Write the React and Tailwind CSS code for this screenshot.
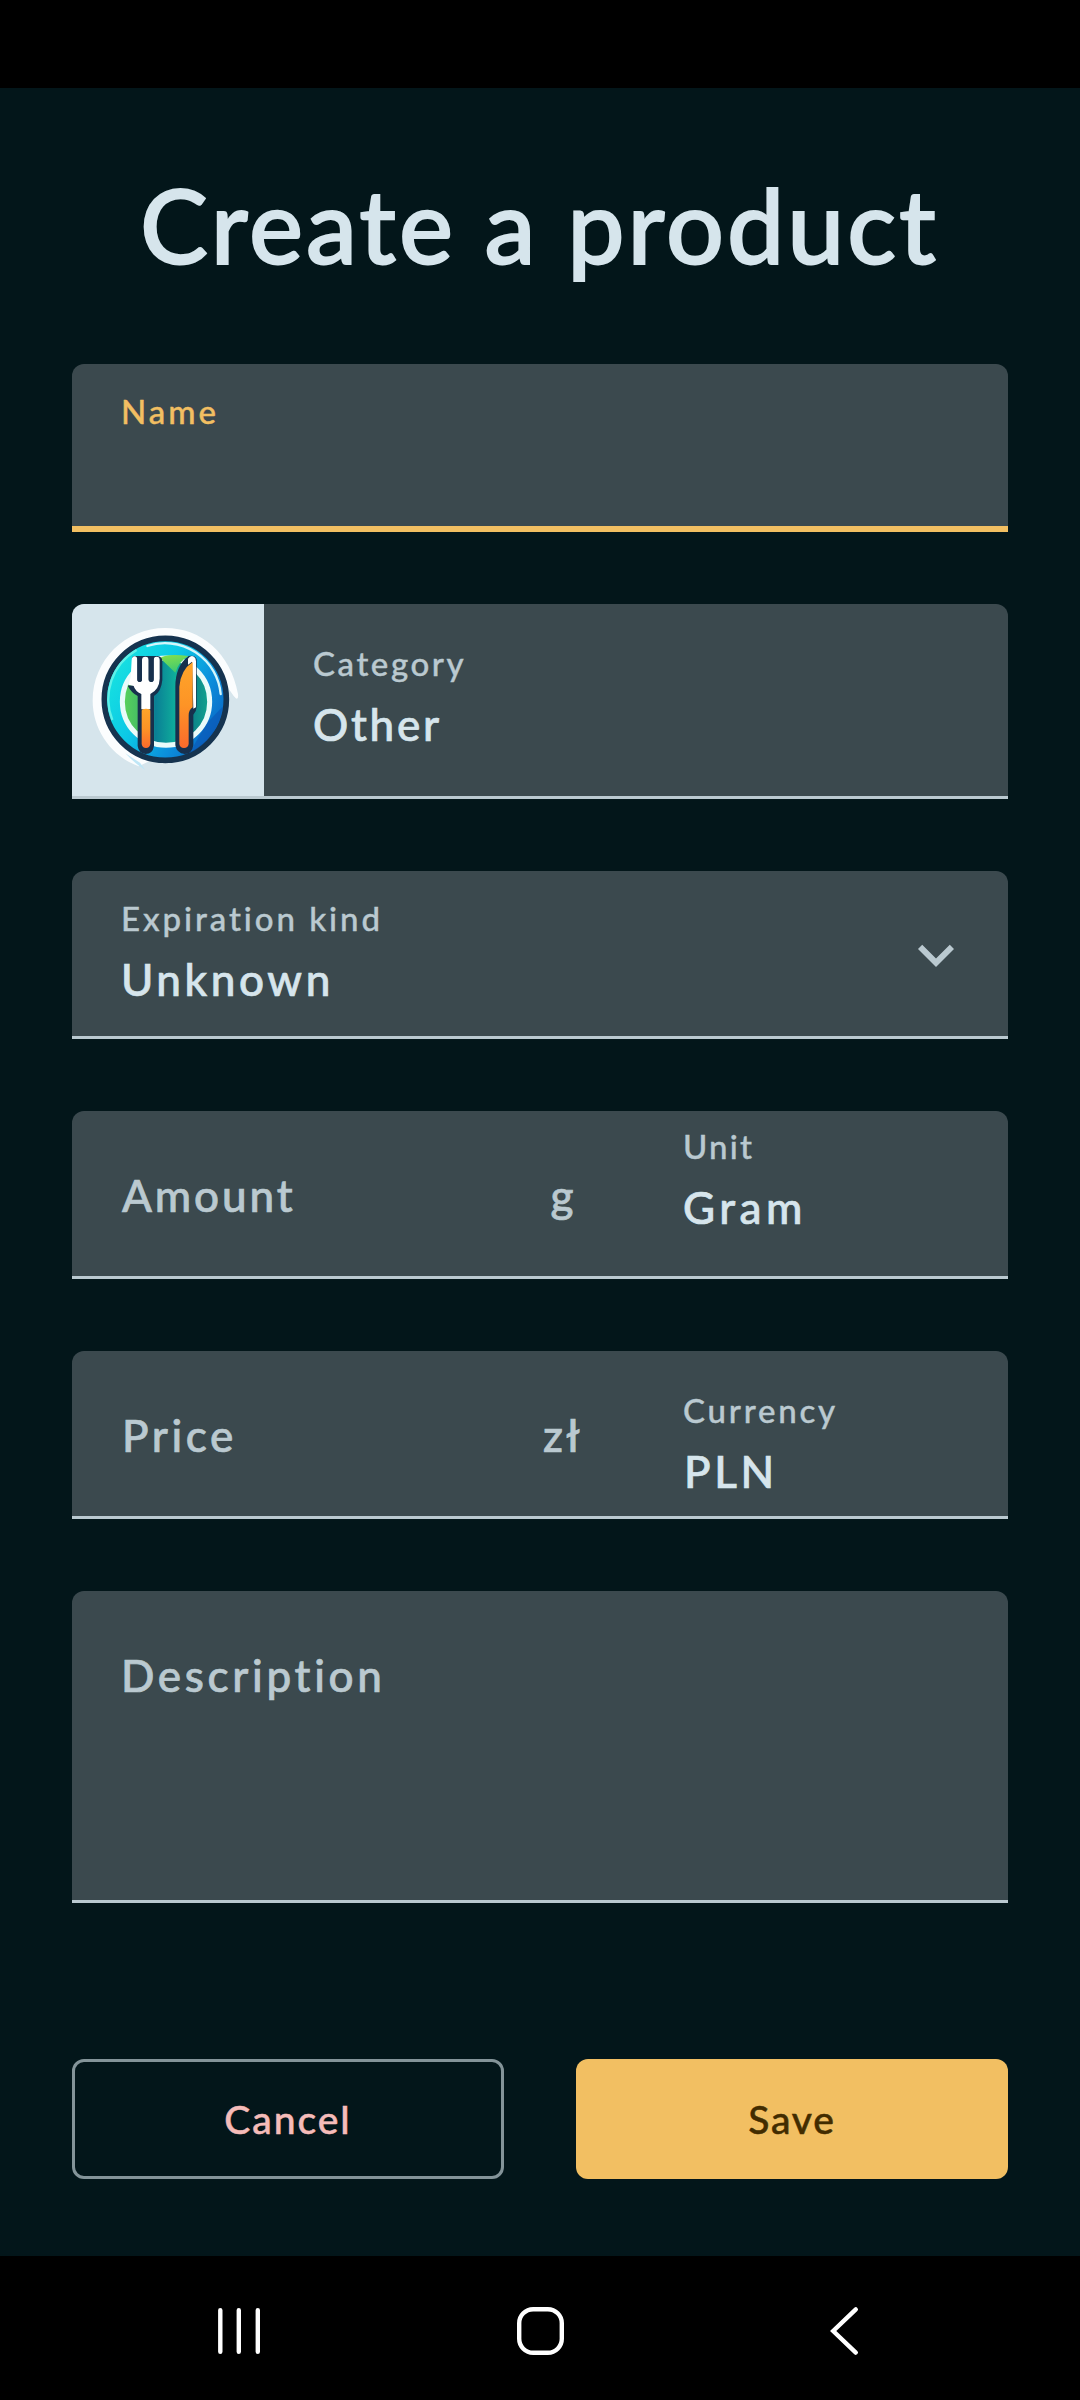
import React from "react";

const LABEL = "text-[33px] leading-[40px] [-webkit-text-stroke:0.4px_currentColor]";
const VALUE = "text-[44px] leading-[54px] [-webkit-text-stroke:0.7px_currentColor]";

function Field({ className, children }) {
  return (
    <div className={`flex rounded-t-[12px] border-b-[3px] border-[#bac9d0] bg-[#3b494e] ${className}`}>
      {children}
    </div>
  );
}

function CategoryLogo() {
  return (
    <svg viewBox="36 42 576 576" className="size-[192px] shrink-0 rounded-tl-[12px] bg-[#d6e5ec]">
      <defs>
        <linearGradient id="rim" x1="0" y1="0.2" x2="1" y2="0.8">
          <stop offset="0" stopColor="#19e6df" />
          <stop offset="0.4" stopColor="#0cc8e6" />
          <stop offset="0.7" stopColor="#0b8fdc" />
          <stop offset="1" stopColor="#0a5fc0" />
        </linearGradient>
        <linearGradient id="plate" x1="0" y1="0" x2="1" y2="0">
          <stop offset="0" stopColor="#5bd35a" />
          <stop offset="0.25" stopColor="#3fb868" />
          <stop offset="0.38" stopColor="#0a7f95" />
          <stop offset="0.62" stopColor="#0fb09c" />
          <stop offset="0.75" stopColor="#0a7a88" />
          <stop offset="1" stopColor="#12a58f" />
        </linearGradient>
        <linearGradient id="top" x1="0" y1="0" x2="0.3" y2="1">
          <stop offset="0" stopColor="#86e04a" />
          <stop offset="1" stopColor="#3fc971" />
        </linearGradient>
        <linearGradient id="handle" x1="0" y1="0" x2="0" y2="1">
          <stop offset="0" stopColor="#ffa52a" />
          <stop offset="0.5" stopColor="#fd9426" />
          <stop offset="1" stopColor="#fb6a2c" />
        </linearGradient>
      </defs>
      <path
        d="M236 529C154 498 98 420 98 332C98 210 196 114 316 114C424 114 512 190 534 312Q536 330 527 325C519 315 508 300 502 290L470 410L316 490Z"
        fill="#fbfdfe"
      />
      <path d="M196 490Q228 524 256 540L240 518Z" fill="#bfe6f6" />
      <path d="M502 290Q512 312 527 325L500 370L400 500L262 520Q320 545 400 510Z" fill="#d6e5ec" />
      <circle cx="316" cy="328" r="183" fill="url(#rim)" stroke="#15334f" strokeWidth="17" />
      <path d="M157 390A170 170 0 0 1 230 180" fill="none" stroke="#5ff0e8" strokeWidth="7" />
      <path d="M262 168A168 168 0 0 1 482 312" fill="none" stroke="#d3f6fb" strokeWidth="7" strokeLinecap="round" />
      <path d="M388 490A178 178 0 0 0 488 350L440 400Z" fill="#0a55b4" opacity="0.6" />
      <ellipse cx="318" cy="335" rx="131" ry="131" fill="url(#plate)" stroke="#e9fbfa" strokeWidth="15" />
      <path d="M300 204Q320 190 386 198Q356 214 346 248Z" fill="url(#top)" />
      <path
        d="M216 206Q216 198 224 198H292Q306 200 307 212V270Q304 305 282 318V468Q278 492 257 492Q236 490 233 468V318Q214 308 203 287L216 286Z"
        fill="#17304d"
      />
      <path
        d="M215 210Q216 199 224 199Q232 199 232 210V268Q232 276 239 276Q246 276 246 268V210Q246 200 256 200Q266 200 266 210V268Q266 276 274 276Q281 276 281 268V210Q281 200 290 200Q299 200 299 210V266Q298 298 271 312V358H244V312Q225 303 221 288L205 284L212 262Z"
        fill="#fff"
      />
      <path d="M232 204Q239 194 246 204V268Q246 276 239 276Q232 276 232 268ZM266 204Q274 194 281 204V268Q281 276 274 276Q266 276 266 268Z" fill="#17304d" />
      <path d="M245 362Q245 356 258 356Q271 356 271 362V462Q269 474 258 474Q247 474 245 462Z" fill="url(#handle)" />
      <path
        d="M386 198Q406 194 410 208V350Q410 362 400 374V466Q396 492 374 492Q350 490 346 466V290Q346 228 386 198Z"
        fill="#17304d"
      />
      <path d="M384 206Q392 194 402 200Q408 204 408 214V352L400 356L396 215L384 224Z" fill="#fff" />
      <path d="M398 216V352Q386 360 386 376V462Q384 474 372 474Q360 474 358 462V290Q362 240 398 216Z" fill="url(#handle)" />
    </svg>
  );
}

export default function App() {
  return (
    <div className="flex h-[2400px] w-[1080px] flex-col bg-[#03161a] font-['Lato','Noto_Sans',sans-serif] font-medium whitespace-nowrap text-[#d6e5ec]">
      <div className="h-[88px] shrink-0 bg-black" />

      <main className="flex h-[2168px] shrink-0 flex-col px-[72px] pt-[77px]">
        <h1 className="pl-[68px] text-[102px] leading-[120px] tracking-[2.96px] [-webkit-text-stroke:1.8px_currentColor]">
          Create a product
        </h1>

        <div className="mt-[79px] h-[168px] rounded-t-[12px] border-b-[6px] border-[#f2bf62] bg-[#3b494e] pt-[27px] pl-[49px]">
          <div className={`${LABEL} tracking-[2.99px] text-[#f2bf62]`}>Name</div>
        </div>

        <Field className="mt-[72px] h-[195px]">
          <CategoryLogo />
          <div className="pt-[39px] pl-[49px]">
            <div className={`${LABEL} tracking-[2.58px] text-[#bac9d0]`}>Category</div>
            <div className={`${VALUE} mt-[14px] tracking-[2.73px]`}>Other</div>
          </div>
        </Field>

        <Field className="mt-[72px] h-[168px] justify-between">
          <div className="pt-[27px] pl-[49px]">
            <div className={`${LABEL} tracking-[2.93px] text-[#bac9d0]`}>Expiration kind</div>
            <div className={`${VALUE} mt-[14px] tracking-[3.6px]`}>Unknown</div>
          </div>
          <svg viewBox="0 0 24 24" className="mt-[48px] mr-[36px] size-[72px] fill-[#bac9d0]">
            <path d="M7.41 8.59L12 13.17l4.59-4.58L18 10l-6 6-6-6z" />
          </svg>
        </Field>

        <Field className="mt-[72px] h-[168px]">
          <div className={`${VALUE} w-[460px] pt-[57px] pl-[50px] tracking-[2.9px] text-[#bac9d0]`}>Amount</div>
          <div className={`${VALUE} w-[60px] pt-[57px] text-center text-[#bac9d0]`}>g</div>
          <div className="pt-[15px] pl-[91px]">
            <div className={`${LABEL} tracking-[2.23px] text-[#bac9d0]`}>Unit</div>
            <div className={`${VALUE} mt-[14px] tracking-[4.5px]`}>Gram</div>
          </div>
        </Field>

        <Field className="mt-[72px] h-[168px]">
          <div className={`${VALUE} w-[460px] pt-[57px] pl-[50px] tracking-[3.57px] text-[#bac9d0]`}>Price</div>
          <div className={`${VALUE} w-[60px] pt-[57px] pl-[11px] tracking-[3px] text-[#bac9d0]`}>zł</div>
          <div className="pt-[39px] pl-[91px]">
            <div className={`${LABEL} tracking-[2.79px] text-[#bac9d0]`}>Currency</div>
            <div className={`${VALUE} mt-[14px] pl-px tracking-[3.6px]`}>PLN</div>
          </div>
        </Field>

        <Field className="mt-[72px] h-[312px]">
          <div className={`${VALUE} pt-[57px] pl-[49px] tracking-[3.66px] text-[#bac9d0]`}>Description</div>
        </Field>

        <div className="mt-[156px] grid grid-cols-2 gap-[72px] text-[39px] leading-[48px]">
          <button className="h-[120px] rounded-[12px] border-[3px] border-[#849499] tracking-[1.95px] text-[#f5bcb9] [-webkit-text-stroke:0.5px_currentColor]">
            Cancel
          </button>
          <button className="h-[120px] rounded-[12px] bg-[#f2bf62] tracking-[1.78px] text-[#422c00] [-webkit-text-stroke:0.5px_currentColor]">
            Save
          </button>
        </div>
      </main>

      <nav className="grid h-[144px] shrink-0 grid-cols-[46px_52px_32px] items-center gap-x-[253px] bg-black pt-[6px] pl-[216px]">
        <svg viewBox="0 0 46 52" className="h-[52px] w-[46px] fill-none stroke-white stroke-[4.4]" strokeLinecap="round">
          <path d="M4.3 5.2V46.8M22.8 5.2V46.8M41.8 5.2V46.8" />
        </svg>
        <svg viewBox="0 0 52 52" className="h-[52px] w-[52px] fill-none stroke-white stroke-[4.4]">
          <rect x="4.2" y="4.2" width="42.6" height="43.6" rx="14" />
        </svg>
        <svg viewBox="0 0 32 52" className="ml-[9px] h-[52px] w-[32px] fill-none stroke-white stroke-[4.4]" strokeLinecap="round">
          <path d="M26.8 4.4L4.2 26L26.8 47.6" />
        </svg>
      </nav>
    </div>
  );
}
